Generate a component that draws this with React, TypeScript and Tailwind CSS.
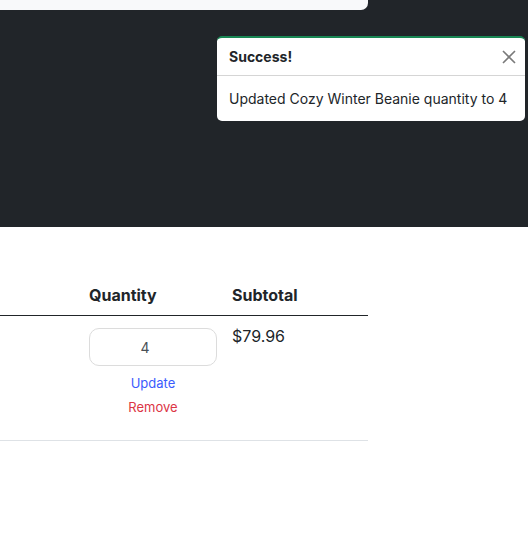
import React from "react";

const App: React.FC = () => {
  return (
    <div className="relative min-h-[534px] w-[528px] bg-white font-['Inter',sans-serif] text-[#212529]">
      <div className="h-[227px] bg-[#212529]">
        <div className="h-[10px] w-[368px] rounded-br-[7px] bg-[#f8f9fa]" />
      </div>

      <div className="absolute left-[217px] top-[36px] w-[308px] overflow-hidden rounded-[5px] border-t-2 border-[#198754] bg-white">
        <div className="flex h-[38px] items-center justify-between border-b border-[#d5d5d5] pl-3 pr-2">
          <span className="text-[14px] font-bold text-[#212529]">Success!</span>
          <svg width="16" height="16" viewBox="0 0 16 16" className="text-[#7a7a7a]">
            <path d="M2 2 L14 14 M14 2 L2 14" stroke="currentColor" strokeWidth="1.6" />
          </svg>
        </div>
        <div className="px-3 py-3 text-[14px] leading-[21px] text-[#212529]">
          Updated Cozy Winter Beanie quantity to 4
        </div>
      </div>

      <div className="w-[368px] pt-[48px]">
        <div className="grid grid-cols-[81px_144px_143px] border-b border-[#212529]">
          <div />
          <div className="px-2 py-2 text-[16px] font-bold leading-[24px]">Quantity</div>
          <div className="px-[7px] py-2 text-[16px] font-bold leading-[24px]">Subtotal</div>
        </div>
        <div className="grid grid-cols-[81px_144px_143px] border-b border-[#dee2e6] pb-[23px]">
          <div />
          <div className="flex flex-col items-center px-2 pt-3">
            <input
              type="text"
              defaultValue="4"
              className="h-[38px] w-[128px] rounded-[10px] border border-[#dcdcdc] bg-white pl-2 pr-6 text-center text-[14px] text-[#495057] outline-none"
            />
            <span className="mt-[7px] text-[13px] leading-[20px] text-[#3b5bfd]">Update</span>
            <span className="mt-1 text-[13px] leading-[20px] text-[#dc3545]">Remove</span>
          </div>
          <div className="px-[7px] pt-2 text-[16px] leading-[24px]">$79.96</div>
        </div>
      </div>
    </div>
  );
};

export default App;
